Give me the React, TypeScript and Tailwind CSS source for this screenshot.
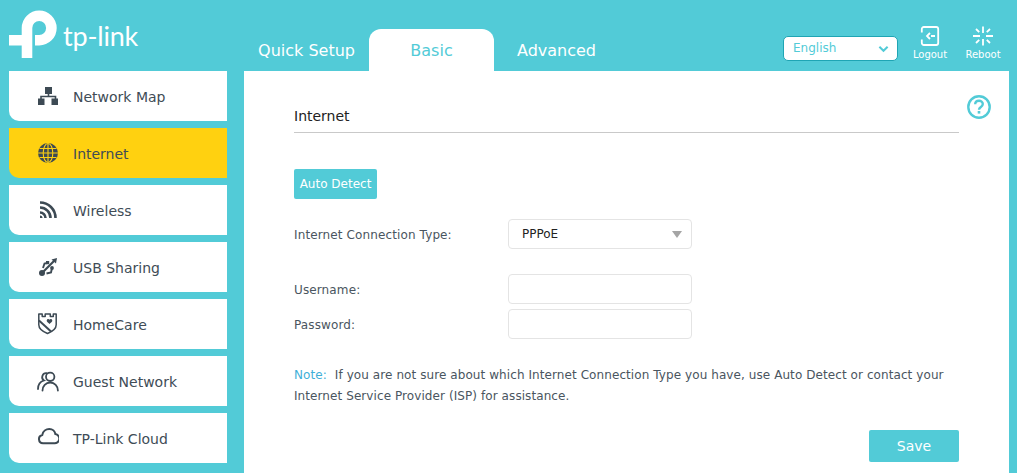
import React from "react";

const Ic = ({ children }: { children: React.ReactNode }) => (
  <svg viewBox="0 0 22 22" className="w-[22px] h-[22px]" fill="none">{children}</svg>
);

const D = "#3d4a54";

const MapIcon = () => (
  <Ic>
    <rect x="8" y="2" width="7" height="7" fill={D} />
    <path d="M11.500 8v4M4 14v-2.500h14.500V14" stroke={D} strokeWidth="1.600" />
    <rect x="1" y="13.500" width="6.500" height="6.500" fill={D} />
    <rect x="14.500" y="13.500" width="6.500" height="6.500" fill={D} />
  </Ic>
);
const GlobeIcon = () => (
  <Ic>
    <circle cx="11" cy="11" r="10" fill={D} />
    <g stroke="#ffd110" strokeWidth="1.100">
      <ellipse cx="11" cy="11" rx="4.800" ry="9.500" />
      <path d="M11 1.500v19M1 11h20M2.500 6.500h17M2.500 15.500h17" />
    </g>
  </Ic>
);
const WifiIcon = () => (
  <Ic>
    <g stroke={D} strokeWidth="2.600">
      <path d="M3 3.500A15.500 15.500 0 0 1 18.500 19" />
      <path d="M3 8.500A10.500 10.500 0 0 1 13.500 19" />
      <path d="M3 13.500A5.500 5.500 0 0 1 8.500 19" />
    </g>
    <path d="M3 16.500a2.500 2.500 0 0 1 2.500 2.500H3z" fill={D} />
  </Ic>
);
const UsbIcon = () => (
  <Ic>
    <circle cx="5" cy="17" r="3" fill={D} />
    <path d="M5 17 17 5" stroke={D} strokeWidth="2.200" />
    <path d="M6 12 7.500 7.500 10.500 7M9.500 17.500 14 16.500l.8-3.500" stroke={D} strokeWidth="1.900" />
    <path d="M14.500 3.500 20 2l-1 5.500z" fill={D} />
    <rect x="9" y="5" width="3.200" height="3.200" fill={D} />
    <circle cx="15" cy="12" r="1.900" fill={D} />
  </Ic>
);
const ShieldIcon = () => (
  <Ic>
    <path d="M1.800 1v10.800c0 4 3.800 6.800 8.700 8.700 4.900-1.900 8.700-4.700 8.700-8.700V1h-2.900v2.600h-3V1H8.200v2.600h-3V1z" stroke={D} strokeWidth="1.500" strokeLinejoin="round" />
    <path d="M2 7.500 14 18.500" stroke={D} strokeWidth="2" />
    <path d="M12.500 6.800c.8-1.200 2.800-.8 2.800.9 0 1.100-1.400 2-2.800 3.200-1.400-1.200-2.800-2.100-2.800-3.200 0-1.700 2-2.100 2.800-.9z" fill={D} />
  </Ic>
);
const GuestIcon = () => (
  <Ic>
    <g stroke={D} strokeWidth="1.800" strokeLinecap="round">
      <circle cx="13.200" cy="6.800" r="4.200" />
      <path d="M9.800 3.200A4 4 0 0 0 7 10.500C3.500 11.500 1 14.800 1 19" />
      <path d="M5.500 20.500c0-4.400 3.300-8 7.700-8s7.700 3.600 7.700 8" />
    </g>
  </Ic>
);
const CloudIcon = () => (
  <Ic>
    <path d="M6 16.200a4.200 4.200 0 0 1-.7-8.300C6 4.300 9.100 2 12.300 2c3.300 0 5.700 2.300 6.100 5.100a4.600 4.600 0 0 1-1.400 9.100z" stroke={D} strokeWidth="2" />
  </Ic>
);

const items: [string, React.ReactNode][] = [
  ["Network Map", <MapIcon />],
  ["Internet", <GlobeIcon />],
  ["Wireless", <WifiIcon />],
  ["USB Sharing", <UsbIcon />],
  ["HomeCare", <ShieldIcon />],
  ["Guest Network", <GuestIcon />],
  ["TP-Link Cloud", <CloudIcon />],
];

const Logo = () => (
  <svg viewBox="0 0 50 50" className="w-[50px] h-[50px] shrink-0" fill="none">
    <rect x="0" y="26" width="18" height="10.500" fill="#fff" />
    <path d="M18 49V19A12.200 12.200 0 1 1 30.200 31.200H26" stroke="#fff" strokeWidth="10.600" />
  </svg>
);

const inputCls = "w-[184px] h-[30px] rounded-[4px] border border-[#e4e4e4] bg-white";

export default function App() {
  return (
    <div className="w-[1017px] h-[473px] overflow-hidden bg-[#52cbd7] font-['DejaVu_Sans',sans-serif] text-[14px] leading-none">
      <header className="h-[71px] flex items-end">
        <div className="w-[244px] h-full pl-[9px] pt-[9px] flex items-start shrink-0">
          <Logo />
          <span className="ml-[4px] mt-[9px] text-white text-[27px] leading-[36px] font-normal tracking-[-0.2px] font-['Lato',sans-serif]">tp-link</span>
        </div>
        <nav className="flex items-end text-[16px] w-[375px] shrink-0">
          <span className="w-[125px] h-[42px] pt-[2px] flex items-center justify-center text-white">Quick Setup</span>
          <span className="w-[125px] h-[42px] pt-[2px] flex items-center justify-center text-[#52cbd7] bg-white rounded-t-[12px]">Basic</span>
          <span className="w-[125px] h-[42px] pt-[2px] flex items-center justify-center text-white">Advanced</span>
        </nav>
        <div className="flex-1 h-full flex items-start justify-end pr-[15px] pt-[26px]">
          <div className="w-[115px] h-[25px] mt-[10px] pb-[2px] rounded-[5px] bg-white border border-[#1fa5b4] flex items-center justify-between pl-[9px] pr-[8px] text-[12px] text-[#52cbd7]">
            <span>English</span>
            <svg viewBox="0 0 12 8" className="w-[11px] h-[8px] mt-[2px]"><path d="M1.500 1.500 6 6l4.500-4.500" stroke="#52cbd7" strokeWidth="2.200" fill="none" /></svg>
          </div>
          <div className="ml-[13px] w-[38px] flex flex-col items-center">
            <svg viewBox="0 0 20 20" className="w-[20px] h-[20px]" fill="none">
              <path d="M1.800 6.500V3a2 2 0 0 1 2-2h12.400a2 2 0 0 1 2 2v14a2 2 0 0 1-2 2H3.800a2 2 0 0 1-2-2v-3.500" stroke="#fff" strokeWidth="1.800" />
              <path d="M10 7l-3 3 3 3M11 10h4" stroke="#fff" strokeWidth="1.800" />
            </svg>
            <span className="mt-[4px] text-[10px] text-white">Logout</span>
          </div>
          <div className="ml-[15px] w-[38px] flex flex-col items-center">
            <svg viewBox="0 0 20 20" className="w-[20px] h-[20px]" fill="none" stroke="#fff" strokeWidth="1.800">
              <path d="M10 .5v6.500M10 13v6.500M0 10h7M13 10h7M3 3l3.200 3.200M17 3l-3.200 3.200M3 17l3.200-3.200M17 17l-3.200-3.200" />
            </svg>
            <span className="mt-[4px] text-[10px] text-white">Reboot</span>
          </div>
        </div>
      </header>
      <div className="flex h-[402px]">
        <aside className="w-[244px] shrink-0 pl-[9px] flex flex-col gap-[7px]">
          {items.map(([label, icon], i) => (
            <div key={label} className={`w-[218px] h-[50px] shrink-0 rounded-bl-[10px] flex items-center pl-[28px] ${i === 1 ? "bg-[#ffd110]" : "bg-white"} text-[#404c56]`}>
              <span className="block w-[36px] shrink-0">{icon}</span>
              <span className="pt-[2px]">{label}</span>
            </div>
          ))}
        </aside>
        <main className="w-[765px] h-full bg-white px-[50px] text-[12px] text-[#4a5560]">
          <div className="relative pt-[38px] h-[62px] border-b border-[#c9c9c9] text-[14px] text-[#222]">
            Internet
            <svg viewBox="0 0 24 24" className="absolute -right-[32px] top-[24px] w-[24px] h-[24px]" fill="none">
              <circle cx="12" cy="12" r="10.700" stroke="#52cbd7" strokeWidth="2.400" />
              <path d="M8.200 9.300c0-4.700 7.600-4.700 7.600-.2 0 2.900-3.800 2.800-3.800 5.600" stroke="#52cbd7" strokeWidth="2.400" />
              <rect x="10.700" y="16" width="2.600" height="2.600" fill="#52cbd7" />
            </svg>
          </div>
          <button className="mt-[36px] block w-[83px] h-[30px] rounded-[2px] bg-[#52cbd7] text-white text-[12px] font-normal">Auto Detect</button>
          <div className="mt-[20px] flex items-center">
            <span className="w-[214px] pt-[2px] tracking-[0.12px]">Internet Connection Type:</span>
            <div className={`${inputCls} flex items-center justify-between pl-[13px] pr-[9px] text-[#222]`}>
              <span>PPPoE</span>
              <svg viewBox="0 0 10 7" className="w-[10px] h-[7px]"><path d="M0 0h10L5 7z" fill="#a5a5a5" /></svg>
            </div>
          </div>
          <div className="mt-[25px] flex items-center">
            <span className="w-[214px] pt-[2px] tracking-[0.12px]">Username:</span>
            <div className={inputCls} />
          </div>
          <div className="mt-[5px] flex items-center">
            <span className="w-[214px] pt-[2px] tracking-[0.12px]">Password:</span>
            <div className={inputCls} />
          </div>
          <div className="mt-[26px] leading-[21px] tracking-[0.08px]">
            <div className="flex gap-[8px]">
              <span className="text-[#3fb0d8]">Note:</span>
              <span>If you are not sure about which Internet Connection Type you have, use Auto Detect or contact your</span>
            </div>
            <div>Internet Service Provider (ISP) for assistance.</div>
          </div>
          <div className="mt-[23px] flex justify-end">
            <button className="w-[90px] h-[32px] rounded-[2px] bg-[#52cbd7] text-white text-[14px]">Save</button>
          </div>
        </main>
      </div>
    </div>
  );
}
